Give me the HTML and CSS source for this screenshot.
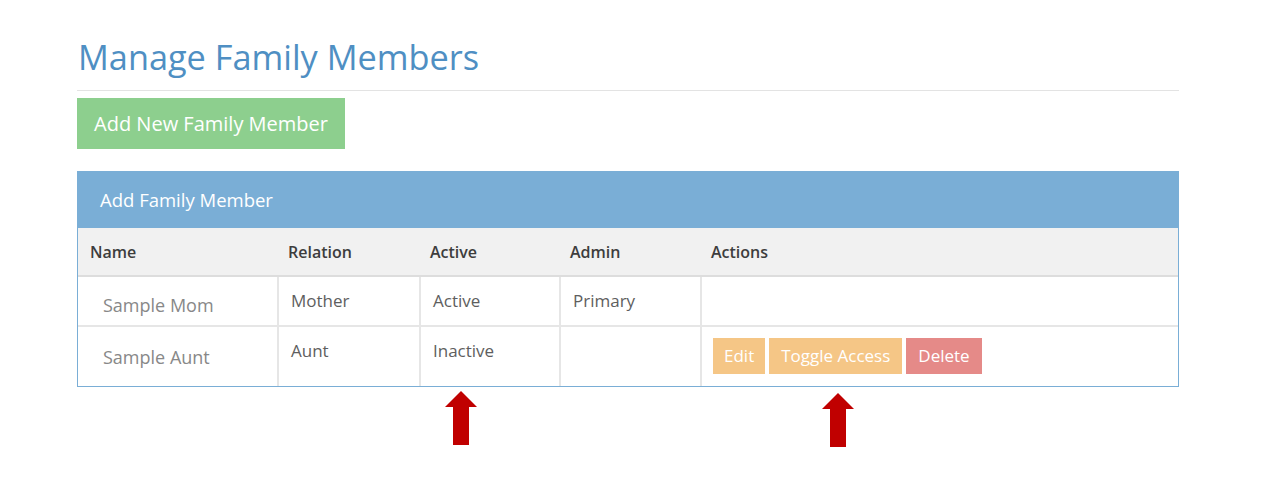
FILE: index.html
```html
<!DOCTYPE html>
<html>
<head>
<meta charset="utf-8">
<link rel="stylesheet" href="styles.css">
</head>
<body>
<div class="page">
  <h1 class="title">Manage Family Members</h1>
  <hr class="rule">
  <button class="btn-add">Add New Family Member</button>
  <div class="panel">
    <div class="panel-heading">Add Family Member</div>
    <table class="members">
      <thead>
        <tr>
          <th class="c-name">Name</th>
          <th class="c-rel">Relation</th>
          <th class="c-act">Active</th>
          <th class="c-adm">Admin</th>
          <th class="c-actions">Actions</th>
        </tr>
      </thead>
      <tbody>
        <tr class="r1">
          <td class="name">Sample Mom</td>
          <td>Mother</td>
          <td>Active</td>
          <td>Primary</td>
          <td></td>
        </tr>
        <tr class="r2">
          <td class="name">Sample Aunt</td>
          <td>Aunt</td>
          <td>Inactive</td>
          <td></td>
          <td class="actions">
            <span class="btn warn edit">Edit</span><span class="btn warn">Toggle Access</span><span class="btn danger">Delete</span>
          </td>
        </tr>
      </tbody>
    </table>
    <svg class="arrow a1" width="32" height="54" viewBox="0 0 32 54"><polygon points="16,0 32,16 24,16 24,54 8,54 8,16 0,16" fill="#c00000"/></svg>
    <svg class="arrow a2" width="32" height="54" viewBox="0 0 32 54"><polygon points="16,0 32,16 24,16 24,54 8,54 8,16 0,16" fill="#c00000"/></svg>
  </div>
</div>
</body>
</html>
```
FILE: styles.css
```css
html, body {
  margin: 0;
  padding: 0;
  background: #ffffff;
}
body {
  font-family: "Open Sans", "Liberation Sans", sans-serif;
  color: #555;
  min-height: 502px;
}
.page {
  margin-left: 77px;
  width: 1102px;
  padding-top: 31px;
  padding-bottom: 100px;
}
.title {
  margin: 0 0 0 1px;
  font-size: 34.3px;
  font-weight: 400;
  line-height: 51px;
  color: #4f8fc3;
}
.rule {
  border: 0;
  border-top: 1px solid #e3e3e3;
  margin: 8px 0 7px 0;
  height: 0;
}
.btn-add {
  display: block;
  border: 0;
  background: #8dcf8e;
  color: #fff;
  font-family: "Open Sans", "Liberation Sans", sans-serif;
  font-size: 20px;
  height: 51px;
  width: 268px;
  padding: 0;
  margin: 0;
}
.panel {
  position: relative;
  margin-top: 22px;
  border: 1px solid #7aaed6;
}
.panel-heading {
  background: #7aaed6;
  color: #fff;
  font-size: 18.5px;
  height: 56px;
  line-height: 56px;
  padding-left: 22px;
}
.members {
  width: 100%;
  border-collapse: collapse;
  font-size: 17px;
}
.members th {
  background: #f1f1f1;
  text-align: left;
  font-weight: 600;
  font-size: 16px;
  color: #3d3d3d;
  height: 47px;
  padding: 0 10px;
  border-bottom: 2px solid #dddddd;
  vertical-align: middle;
}
.members th.c-name { padding-left: 12px; }
.c-name { width: 178px; }
.c-rel { width: 122px; }
.c-act { width: 120px; }
.c-adm { width: 121px; }
.members td {
  padding: 12px 12px 0 12px;
  vertical-align: top;
  border-left: 2px solid #e6e6e6;
  border-top: 2px solid #e6e6e6;
  line-height: 24px;
  color: #5e5e5e;
}
.members tbody tr:first-child td { border-top: 0; }
.members td:first-child { border-left: 0; }
.r1 { height: 50px; }
.r2 { height: 60px; }
.members td.name {
  padding-left: 25px;
  padding-top: 16px;
  font-size: 18px;
  color: #888;
}
.r2 td.name { padding-top: 18px; }
.members td.actions { padding-top: 11px; padding-left: 11px; }
.btn {
  display: inline-block;
  color: #fff;
  height: 36px;
  line-height: 36px;
  padding: 0 12px;
  margin-right: 4px;
  font-size: 17px;
}
.btn.edit { padding: 0 11px; }
.warn { background: #f5c686; }
.danger { background: #e58a88; }
.arrow {
  position: absolute;
  display: block;
}
.a1 { left: 367px; top: 219px; }
.a2 { left: 744px; top: 221px; }
```
